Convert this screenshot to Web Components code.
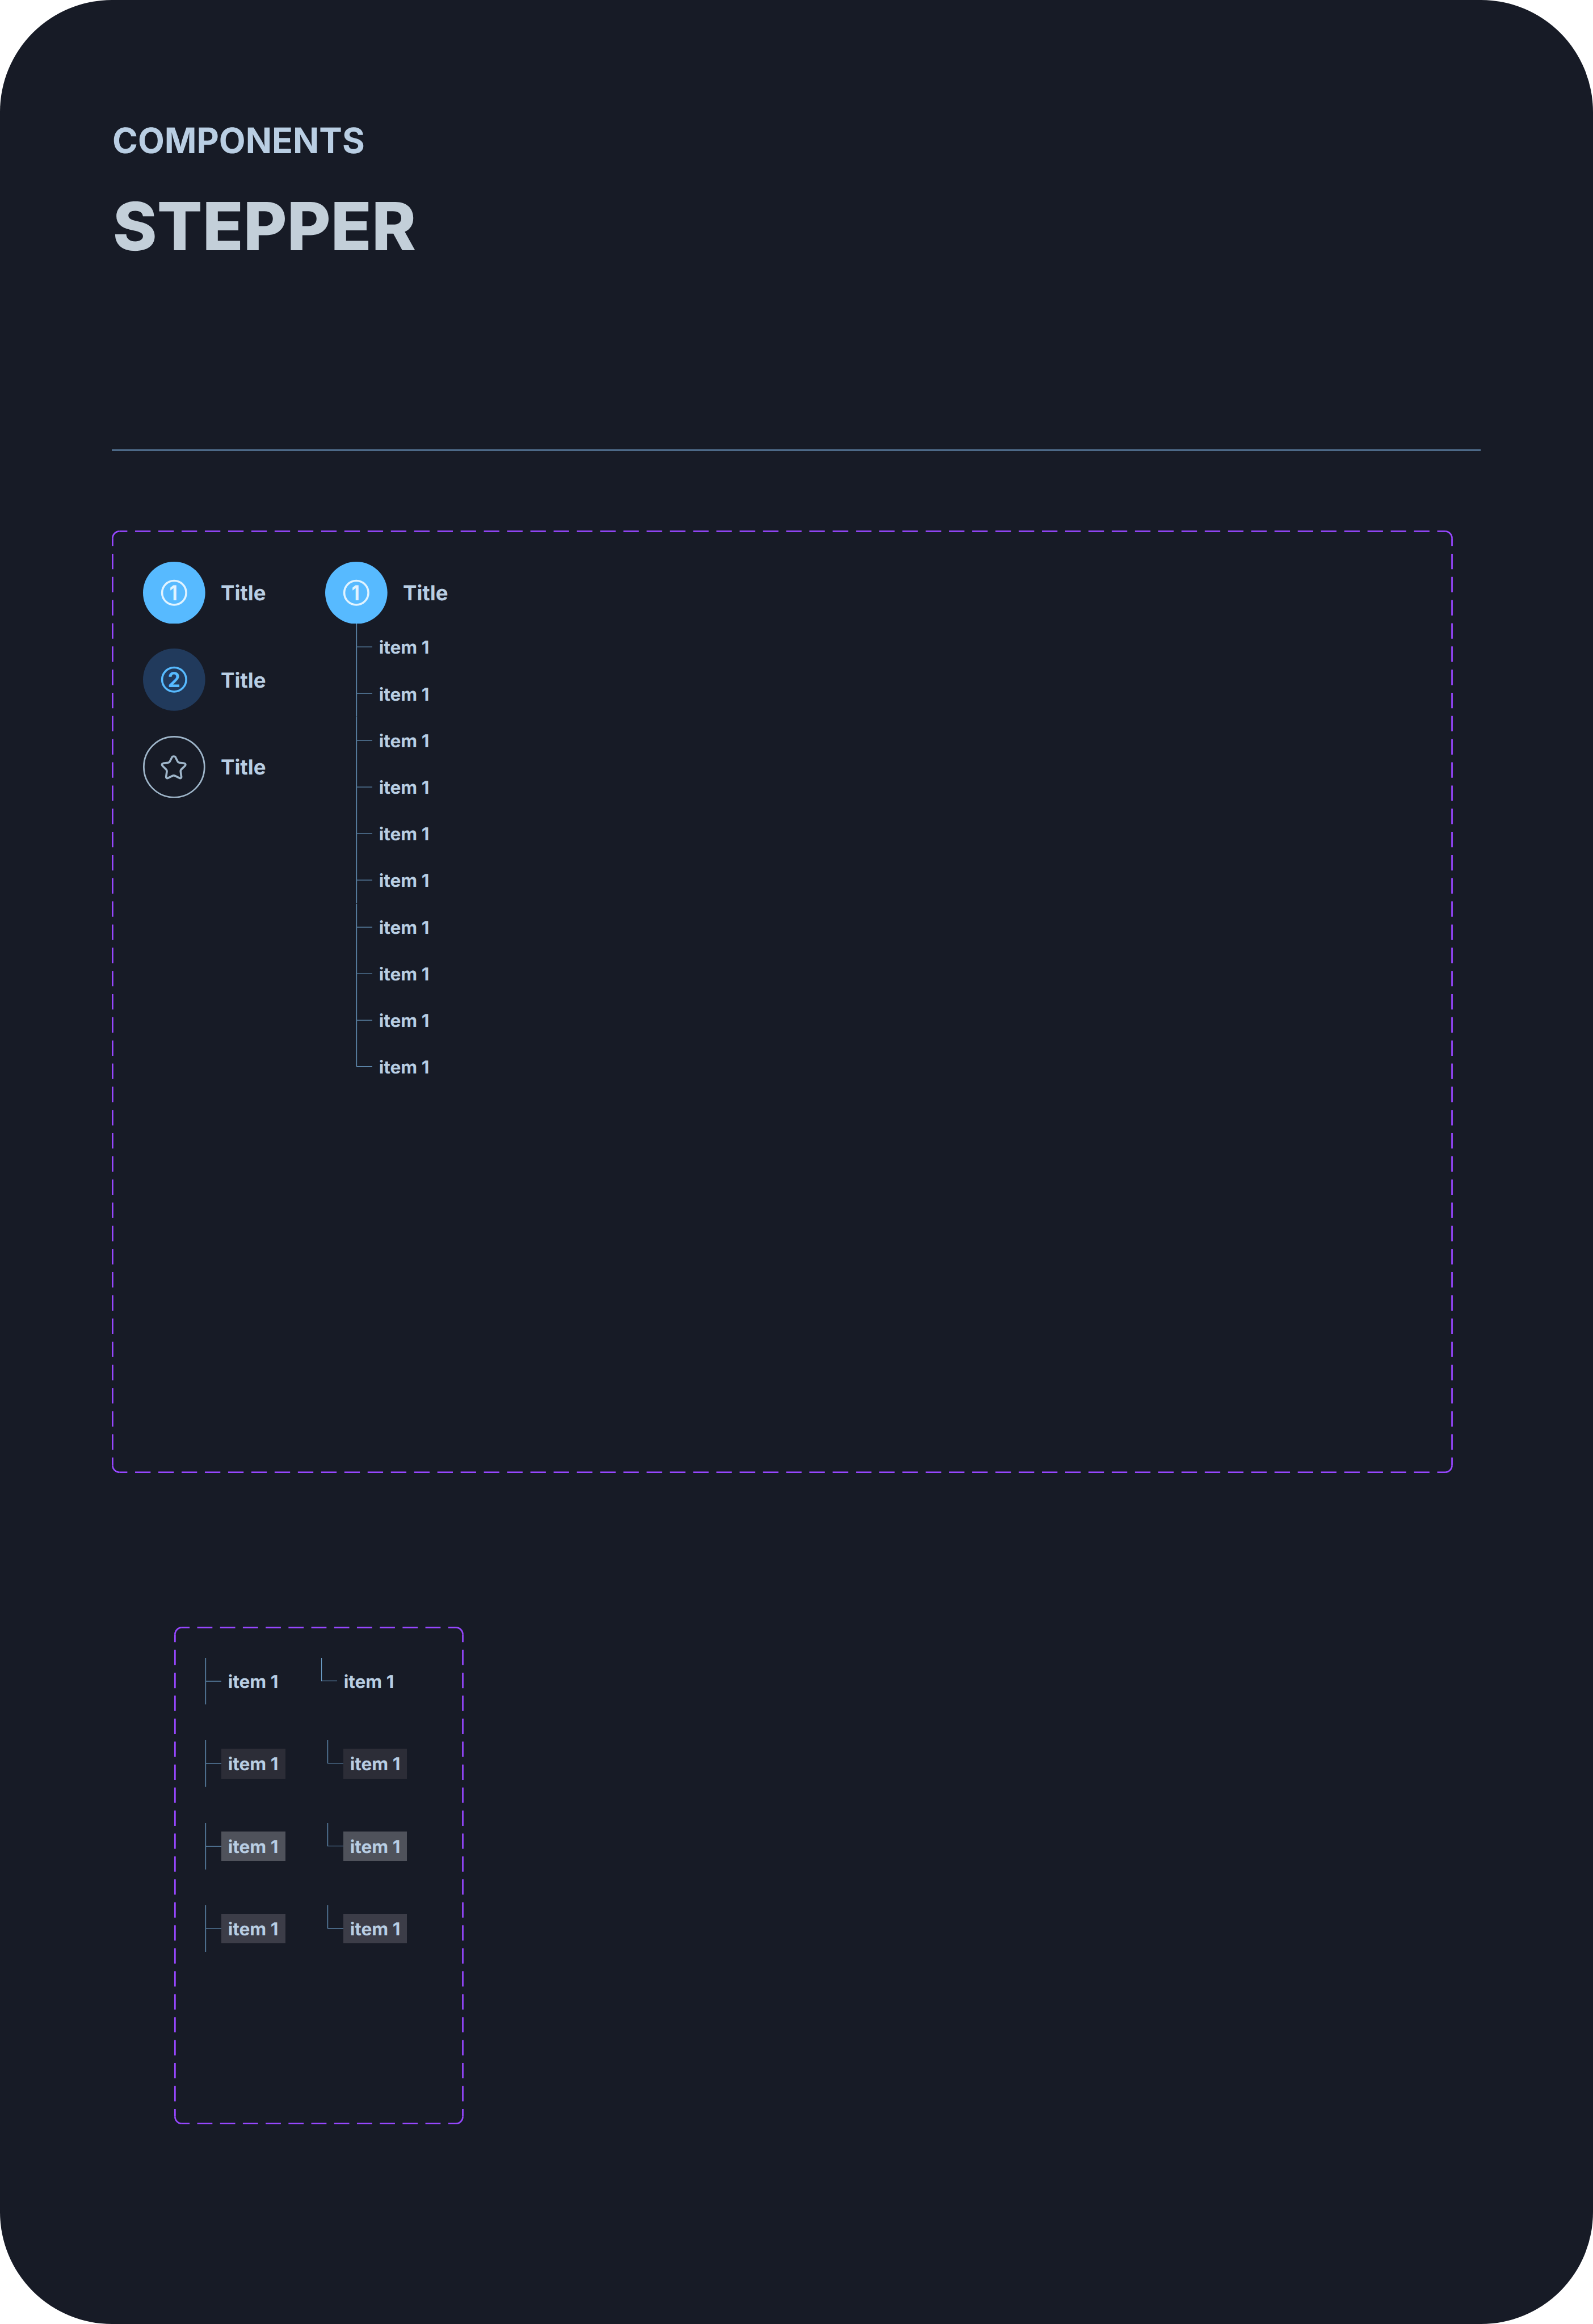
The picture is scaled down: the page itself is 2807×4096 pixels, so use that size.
<!DOCTYPE html>
<html lang="en">
<head>
<meta charset="utf-8">
<title>Components / Stepper</title>
<style>
  html, body { margin: 0; background: #fff; overflow: hidden; }
  body { font-family: Inter, "Noto Sans", sans-serif; }
</style>
</head>
<body>
<spec-sheet>
  <sheet-header slot="header"></sheet-header>

  <dash-frame w="3448" h="2424">
    <div style="display:flex;gap:308px">
      <div style="display:flex;flex-direction:column;gap:64px;width:160px">
        <step-head kind="active" digit="1"></step-head>
        <step-head kind="done" digit="2"></step-head>
        <step-head kind="idle"></step-head>
      </div>
      <step-group items="10"></step-group>
    </div>
  </dash-frame>

  <dash-frame w="744" h="1280" style="margin:396px 0 0 160px">
    <div style="display:flex;flex-direction:column;gap:92px">
      <div style="display:flex;gap:108px"><step-item tight></step-item><step-item tight last corner></step-item></div>
      <div style="display:flex;gap:108px"><step-item fill="#2c2d37"></step-item><step-item last corner fill="#2c2d37"></step-item></div>
      <div style="display:flex;gap:108px"><step-item fill="#4f525b"></step-item><step-item last corner fill="#4f525b"></step-item></div>
      <div style="display:flex;gap:108px"><step-item fill="#3c3d48"></step-item><step-item last corner fill="#3c3d48"></step-item></div>
    </div>
  </dash-frame>
</spec-sheet>

<script>
const LINE = '#70a4ce';
const pen = document.createElement('canvas').getContext('2d');

class Base extends HTMLElement {
  connectedCallback() {
    if (this.shadowRoot) return;
    this.attachShadow({ mode: 'open' }).innerHTML = this.view();
    if (this.ready) this.ready();
  }
  num(name, fallback = 0) { return this.hasAttribute(name) ? +this.getAttribute(name) : fallback; }
}

/* A single line of text whose ink is stretched to a set width. */
customElements.define('fit-text', class extends Base {
  view() {
    const size = this.num('cap') / 0.727;
    this.css = `${this.getAttribute('weight') || 700} ${size}px Inter`;
    return `<style>
      :host { display:block; flex:none; width:${this.num('box')}px; height:${this.num('line')}px; }
      span { display:inline-block; white-space:pre; font:${this.css}, "Noto Sans", sans-serif;
        line-height:${this.num('line')}px; transform-origin:0 50%; text-rendering:geometricPrecision; }
    </style><span>${this.getAttribute('text')}</span>`;
  }
  ready() {
    pen.font = this.css;
    const m = pen.measureText(this.getAttribute('text'));
    const s = this.num('ink') / (m.actualBoundingBoxLeft + m.actualBoundingBoxRight);
    const x = this.num('lead') + m.actualBoundingBoxLeft * s;
    this.shadowRoot.querySelector('span').style.transform =
      `translate(${x}px, ${this.num('drop')}px) scaleX(${s})`;
  }
});

customElements.define('spec-sheet', class extends Base {
  view() {
    return `<style>
      :host { display:block; zoom:.685303; box-sizing:border-box; width:4096px; height:5977px;
        padding:288px 288px 0; border-radius:288px; background:#171b26; }
    </style><slot name="header"></slot><slot></slot>`;
  }
});

customElements.define('sheet-header', class extends Base {
  view() {
    return `<style>
      :host { display:flex; flex-direction:column; height:872px; margin-bottom:204px; }
      h2, h1 { margin:0; }
      h2 { color:#b9cee3; }
      h1 { color:#c3cfd9; }
      svg { display:block; margin-top:auto; }
    </style>
    <h2><fit-text text="COMPONENTS" cap="66" line="150" box="700" lead="5.4" ink="641.6" drop="1.5"></fit-text></h2>
    <h1><fit-text text="STEPPER" weight="800" cap="124" line="288" box="900" lead="7.7" ink="772.7" drop="1"></fit-text></h1>
    <svg width="3520" height="4"><rect width="3520" height="4" fill="#557697"/></svg>`;
  }
});

customElements.define('dash-frame', class extends Base {
  view() {
    const w = this.num('w'), h = this.num('h'), r = 18;
    const side = (d, len) => {
      const p = len / Math.round(len / 60), on = p * 2 / 3;
      return `<path d="${d}" stroke-dasharray="${on} ${p - on}" stroke-dashoffset="${on / 2}"/>`;
    };
    const R = w - 2, B = h - 2;
    return `<style>
      :host { display:grid; width:${w}px; height:${h}px; }
      svg, div { grid-area:1/1; }
      div { padding:80px; }
    </style>
    <svg width="${w}" height="${h}" fill="none" stroke="#9747ff" stroke-width="4">
      ${side(`M20 2H${w - 20}`, w - 40)}${side(`M20 ${B}H${w - 20}`, w - 40)}
      ${side(`M2 20V${h - 20}`, h - 40)}${side(`M${R} 20V${h - 20}`, h - 40)}
      <path d="M2 20A${r} ${r} 0 0 1 20 2M${w - 20} 2A${r} ${r} 0 0 1 ${R} 20M${R} ${h - 20}A${r} ${r} 0 0 1 ${w - 20} ${B}M20 ${B}A${r} ${r} 0 0 1 2 ${h - 20}"/>
    </svg><div><slot></slot></div>`;
  }
});

const STAR = 'M309 918C313 912 329 912 333 918L351 953Q355 962 365 963L403 968C413 970 415 980 407 988L380 1014Q373 1021 374 1030L380 1072C381 1082 373 1086 364 1081L331 1064Q321 1059 311 1064L278 1081C269 1086 261 1082 262 1072L268 1030Q269 1021 262 1014L235 988C227 980 229 970 239 968L277 963Q287 962 291 953Z';

customElements.define('step-head', class extends Base {
  view() {
    const kind = this.getAttribute('kind'), digit = this.getAttribute('digit');
    const fg = kind === 'active' ? '#e0f3ff' : '#57baff';
    const art = kind === 'idle'
      ? `<svg width="160" height="160" viewBox="84 756 480 480" fill="none" stroke="#9fb6ca">
           <circle cx="324" cy="996" r="234" stroke-width="12"/>
           <path d="${STAR}" stroke-width="16" stroke-linejoin="round"/></svg>`
      : `<svg width="160" height="160"><circle cx="80" cy="80" r="80" fill="${kind === 'active' ? '#57baff' : '#213a5c'}"/>
           <circle cx="80" cy="80" r="31" fill="none" stroke="${fg}" stroke-width="5.2"/></svg>
         <fit-text style="color:${fg}" text="${digit}" weight="700" cap="38.5" line="60" box="28" drop="0.8"
           lead="${digit === '1' ? 4 : 0}" ink="${digit === '1' ? 16.3 : 28}"></fit-text>`;
    return `<style>
      :host { display:flex; align-items:center; gap:40px; color:#b9cee3; }
      .disc { display:grid; place-items:center; flex:none; width:160px; height:160px; }
      .disc > * { grid-area:1/1; }
    </style><div class="disc">${art}</div>
    <fit-text text="Title" cap="38.7" line="88" box="116" lead="1" ink="113.3" drop="0.9"></fit-text>`;
  }
});

/* One branch of the tree; "last" ends the trunk at the branch. */
customElements.define('step-item', class extends Base {
  view() {
    const last = this.hasAttribute('last');
    const x = this.hasAttribute('corner') ? 0.1 : 0;
    const y = last ? 58.5 : 59.25;
    return `<style>
      :host { display:flex; align-items:center; height:120px; color:#b9cee3; }
      svg { display:block; flex:none; }
      .box { display:flex; align-items:center; height:76px; padding:0 ${this.hasAttribute('tight') ? 0 : 16}px 0 16px;
        background:${this.getAttribute('fill') || 'none'}; }
    </style>
    <svg width="41.5" height="120" fill="${LINE}">
      <rect x="${x}" width="1.6" height="${last ? 60 : 120}"/>
      <rect x="${x}" y="${y}" width="${41.5 - x}" height="1.5"/>
    </svg>
    <div class="box"><fit-text text="item 1" cap="33.3" line="76" box="132" lead="3" ink="124.6" drop="1.8"></fit-text></div>`;
  }
});

customElements.define('step-group', class extends Base {
  view() {
    const n = this.num('items');
    const rows = Array.from({ length: n }, (_, i) => `<step-item${i === n - 1 ? ' last' : ''}></step-item>`).join('');
    return `<style>
      :host { display:flex; flex-direction:column; }
      .branch { display:flex; flex-direction:column; padding-left:80px; }
    </style><step-head kind="active" digit="1"></step-head><div class="branch">${rows}</div>`;
  }
});
</script>
</body>
</html>
